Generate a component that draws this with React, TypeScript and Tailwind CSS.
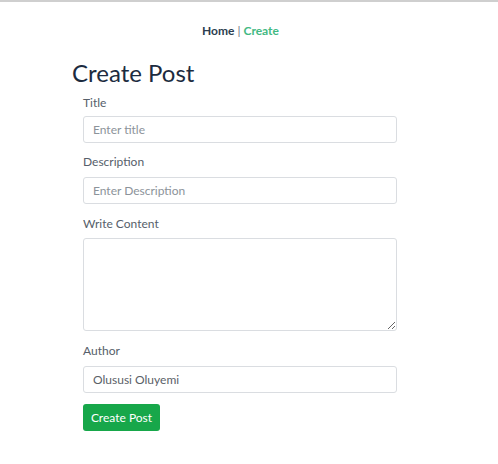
import React from "react";

export default function App() {
  const font = { fontFamily: "Lato, 'Open Sans', Arial, sans-serif" };
  return (
    <div className="w-[498px] h-[464px] bg-white border-t-2 border-[#cfcfcf]" style={font}>
      <nav className="mt-[21px] pr-[17px] h-4 flex justify-center items-center text-[12px] leading-4 font-bold text-[#2c3e50]">
        <span>Home</span>
        <span className="mx-[3px] font-normal text-[#6b7280]">|</span>
        <span className="text-[#42b983]">Create</span>
      </nav>
      <div className="ml-[72px] mt-[20px]">
        <h1 className="text-[24px] leading-[28px] text-[#1c2b40] font-normal">Create Post</h1>
        <form className="ml-[11px] mt-[8px] w-[314px] flex flex-col text-[12px]">
          <label className="h-4 leading-4 text-[#56606a]">Title</label>
          <input
            className="mt-[5px] h-[27px] px-[9px] border border-[#dadde1] rounded-[3px] text-[12px] text-[#5a6168] placeholder:text-[#8c939a] outline-none"
            placeholder="Enter title"
          />
          <label className="mt-[11px] h-4 leading-4 text-[#56606a]">Description</label>
          <input
            className="mt-[7px] h-[27px] px-[9px] border border-[#dadde1] rounded-[3px] text-[12px] text-[#5a6168] placeholder:text-[#8c939a] outline-none"
            placeholder="Enter Description"
          />
          <label className="mt-[12px] h-4 leading-4 text-[#56606a]">Write Content</label>
          <textarea className="mt-[6px] h-[93px] px-[9px] py-[6px] border border-[#dadde1] rounded-[3px] text-[12px] outline-none resize-y" />
          <label className="mt-[12px] h-4 leading-4 text-[#56606a]">Author</label>
          <input
            className="mt-[7px] h-[27px] px-[9px] border border-[#dadde1] rounded-[3px] text-[12px] text-[#5a6168] outline-none"
            defaultValue="Olususi Oluyemi"
          />
          <div className="mt-[11px]">
            <button
              type="button"
              className="w-[77px] h-[27px] bg-[#17a74a] rounded-[3px] text-white text-[12px]"
            >
              Create Post
            </button>
          </div>
        </form>
      </div>
    </div>
  );
}
